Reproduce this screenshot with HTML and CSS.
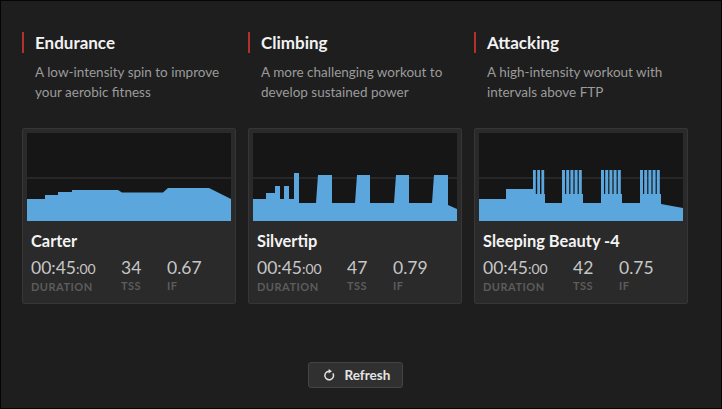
FILE: index.html
```html
<!DOCTYPE html>
<html>
<head>
<meta charset="utf-8">
<title>Workouts</title>
<link rel="stylesheet" href="styles.css">
</head>
<body>
<div class="frame">
  <div class="grid">
    <section class="col">
      <h2 class="title">Endurance</h2>
      <p class="desc">A low-intensity spin to improve your aerobic fitness</p>
      <div class="card">
        <svg class="chart" width="204" height="88" viewBox="0 0 204 88">
          <rect width="204" height="88" fill="#161616"/>
          <rect x="0" y="44.5" width="204" height="1" fill="#383838"/>
          <path fill="#5ba6dd" d="M0,88 V66 H18 V62 H31 V59 H45 V57 H91 L95,59.5 H136 L141,55 H182 L204,66 V88 Z"/>
        </svg>
        <div class="name">Carter</div>
        <div class="stats">
          <div class="stat dur"><div class="val">00:45<small>:00</small></div><div class="lbl">Duration</div></div>
          <div class="stat tss"><div class="val">34</div><div class="lbl">TSS</div></div>
          <div class="stat"><div class="val">0.67</div><div class="lbl">IF</div></div>
        </div>
      </div>
    </section>
    <section class="col">
      <h2 class="title">Climbing</h2>
      <p class="desc">A more challenging workout to develop sustained power</p>
      <div class="card">
        <svg class="chart" width="204" height="88" viewBox="0 0 204 88">
          <rect width="204" height="88" fill="#161616"/>
          <rect x="0" y="44.5" width="204" height="1" fill="#383838"/>
          <path fill="#5ba6dd" d="M0,88 V66 H13 V60 H22 V53 H27 V66 H31 V53 H36 V66 H41 V40 H46 V70 H63 L65,42 H79 V70 H102 L104,42 H117 V70 H141 L143,42 H156 V70 H179 L181,42 H195 V72 L204,76 V88 Z"/>
        </svg>
        <div class="name">Silvertip</div>
        <div class="stats">
          <div class="stat dur"><div class="val">00:45<small>:00</small></div><div class="lbl">Duration</div></div>
          <div class="stat tss"><div class="val">47</div><div class="lbl">TSS</div></div>
          <div class="stat"><div class="val">0.79</div><div class="lbl">IF</div></div>
        </div>
      </div>
    </section>
    <section class="col">
      <h2 class="title">Attacking</h2>
      <p class="desc">A high-intensity workout with intervals above FTP</p>
      <div class="card">
        <svg class="chart" width="204" height="88" viewBox="0 0 204 88">
          <rect width="204" height="88" fill="#161616"/>
          <rect x="0" y="44.5" width="204" height="1" fill="#383838"/>
          <g fill="#5ba6dd">
            <path d="M0,88 V66 H27 V56 H54 V61 H66 V70 H83 V61 H104 V70 H122 V61 H143 V70 H161 V61 H182 V71 L204,75 V88 Z"/>
            <rect x="54" y="37" width="2.8" height="25"/>
            <rect x="58.2" y="37" width="2.8" height="25"/>
            <rect x="62.4" y="37" width="2.8" height="25"/>
            <rect x="83" y="37" width="3" height="25"/>
            <rect x="87.2" y="37" width="3" height="25"/>
            <rect x="91.4" y="37" width="3" height="25"/>
            <rect x="95.6" y="37" width="3" height="25"/>
            <rect x="99.8" y="37" width="3" height="25"/>
            <rect x="122" y="37" width="3" height="25"/>
            <rect x="126.2" y="37" width="3" height="25"/>
            <rect x="130.4" y="37" width="3" height="25"/>
            <rect x="134.6" y="37" width="3" height="25"/>
            <rect x="138.8" y="37" width="3" height="25"/>
            <rect x="161" y="37" width="3" height="25"/>
            <rect x="165.2" y="37" width="3" height="25"/>
            <rect x="169.4" y="37" width="3" height="25"/>
            <rect x="173.6" y="37" width="3" height="25"/>
            <rect x="177.8" y="37" width="3" height="25"/>
          </g>
        </svg>
        <div class="name">Sleeping Beauty -4</div>
        <div class="stats">
          <div class="stat dur"><div class="val">00:45<small>:00</small></div><div class="lbl">Duration</div></div>
          <div class="stat tss"><div class="val">42</div><div class="lbl">TSS</div></div>
          <div class="stat"><div class="val">0.75</div><div class="lbl">IF</div></div>
        </div>
      </div>
    </section>
  </div>
  <div class="actions">
    <button class="refresh" type="button">
      <svg class="icon" width="12" height="12" viewBox="0 0 12 12">
        <path d="M9.9,4.3 A4.3,4.3 0 1 1 6,2.2" fill="none" stroke="#e0e0e0" stroke-width="1.5"/>
        <path d="M5.6,0 L9,2.2 L5.6,4.4 Z" fill="#e0e0e0"/>
      </svg>
      <span>Refresh</span>
    </button>
  </div>
</div>
</body>
</html>
```
FILE: styles.css
```css
* { box-sizing: border-box; }
html, body { margin: 0; padding: 0; background: #1e1e1e; }
body { font-family: Lato, "Open Sans", sans-serif; }

.frame {
  width: 722px;
  height: 409px;
  border: 1px solid #050505;
  background: #1e1e1e;
  padding: 31px 0 0 21px;
  overflow: hidden;
}

.grid {
  display: grid;
  grid-template-columns: repeat(3, 214px);
  column-gap: 12px;
}

.title {
  margin: 0;
  border-left: 2px solid #b5302a;
  padding-left: 11px;
  font-size: 17px;
  font-weight: 700;
  line-height: 21px;
  color: #f2f2f2;
}

.desc {
  margin: 9px 0 0;
  padding-left: 13px;
  font-size: 13.5px;
  line-height: 20px;
  color: #9b9b9b;
}

.card {
  margin-top: 26px;
  border: 1px solid #363636;
  border-radius: 2px;
  background: #2a2a2a;
  padding: 4px 4px 10px;
}

.chart { display: block; }

.name {
  margin-top: 10px;
  padding-left: 4px;
  font-size: 16.4px;
  font-weight: 700;
  line-height: 20px;
  color: #f4f4f4;
}

.stats {
  display: flex;
  margin-top: 7px;
  padding-left: 4px;
}

.stat.dur { width: 90px; }
.stat.tss { width: 46px; }

.val {
  font-size: 17.5px;
  line-height: 20px;
  color: #c6c6c6;
}
.val small { font-size: 14px; }

.lbl {
  margin-top: 2px;
  font-size: 11px;
  font-weight: 700;
  line-height: 12px;
  letter-spacing: 0.5px;
  text-transform: uppercase;
  color: #5c5c5c;
}

.actions {
  width: 666px;
  margin-top: 58px;
  display: flex;
  justify-content: center;
}

.refresh {
  display: inline-flex;
  align-items: center;
  gap: 10px;
  width: 95px;
  height: 26px;
  padding: 0 0 0 14px;
  border: 1px solid #444;
  border-radius: 3px;
  background: #303030;
  color: #e4e4e4;
  font-family: Lato, "Open Sans", sans-serif;
  font-size: 13.5px;
  font-weight: 700;
}
.refresh .icon { display: block; }
```
